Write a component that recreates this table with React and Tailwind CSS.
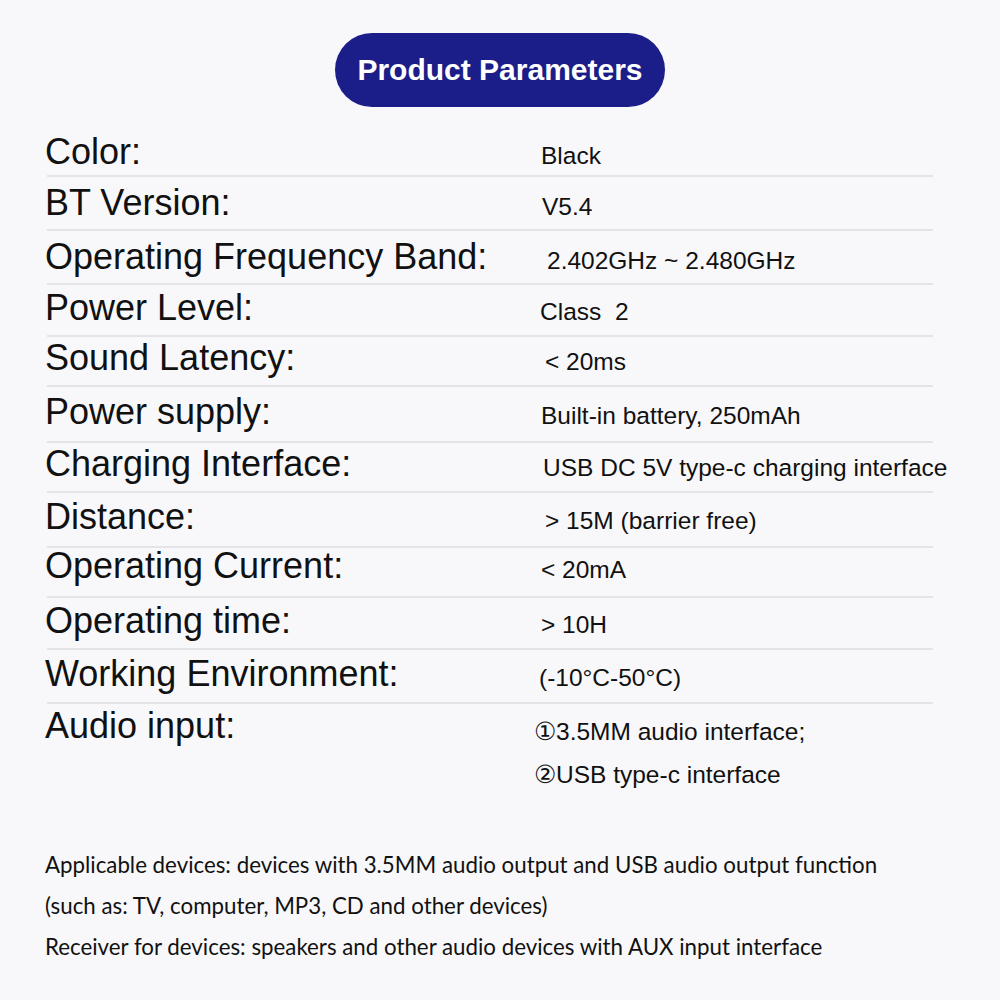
import React from "react";

/* ─── Data ───────────────────────────────────────────────────── */

const PARAMS = [
  { label: "Color:", value: "Black", row: "h-[54px] pb-[5px]", val: "ml-[1px]" },
  { label: "BT Version:", value: "V5.4", row: "h-[54px] pb-[8px]", val: "ml-[2px]" },
  { label: "Operating Frequency Band:", value: "2.402GHz ~ 2.480GHz", row: "h-[54px] pb-[8px]", val: "ml-[7px]" },
  { label: "Power Level:", value: "Class  2", row: "h-[52px] pb-[9px]", val: "ml-0" },
  { label: "Sound Latency:", value: "< 20ms", row: "h-[50px] pb-[9px]", val: "ml-[5px]" },
  { label: "Power supply:", value: "Built-in battery, 250mAh", row: "h-[56px] pb-[11px]", val: "ml-[1px]" },
  { label: "Charging Interface:", value: "USB DC 5V type-c charging interface", row: "h-[50px] pb-[9px]", val: "ml-[3px]" },
  { label: "Distance:", value: "> 15M (barrier free)", row: "h-[55px] pb-[11px]", val: "ml-[5px]" },
  { label: "Operating Current:", value: "< 20mA", row: "h-[50px] pb-[12px]", val: "ml-[1px]" },
  { label: "Operating time:", value: "> 10H", row: "h-[52px] pb-[9px]", val: "ml-[1px]" },
  { label: "Working Environment:", value: "(-10°C-50°C)", row: "h-[54px] pb-[10px]", val: "-ml-[1px]" },
];

const NOTES = [
  "Applicable devices: devices with 3.5MM audio output and USB audio output function",
  "(such as: TV, computer, MP3, CD and other devices)",
  "Receiver for devices: speakers and other audio devices with AUX input interface",
];

/* ─── Components ─────────────────────────────────────────────── */

function ParamRow({ label, value, row, val }) {
  return (
    <div className={`flex flex-col justify-end border-b-2 border-[#e4e4e8] ${row}`}>
      <div className="flex items-baseline whitespace-pre">
        <span className="w-[495px] shrink-0 -ml-[2px] text-[36px] leading-none">{label}</span>
        <span className={`text-[24.5px] leading-none ${val}`}>{value}</span>
      </div>
    </div>
  );
}

export default function App() {
  return (
    <div
      className="w-[1000px] h-[1000px] overflow-hidden bg-[#f8f8fa] text-[#111] pt-[33px]"
      style={{ fontFamily: '"Liberation Sans", Arial, sans-serif' }}
    >
      {/* Title pill */}
      <div className="mx-auto w-[330px] h-[74px] rounded-full bg-[#1b1e88] flex items-center justify-center">
        <span className="text-white font-bold text-[30px] leading-none">Product Parameters</span>
      </div>

      {/* Parameter table */}
      <div className="mt-[16px] ml-[47px] w-[886px]">
        {PARAMS.map((p) => (
          <ParamRow key={p.label} {...p} />
        ))}
        <div className="flex items-start pt-[4px] whitespace-pre">
          <span className="w-[495px] shrink-0 -ml-[2px] text-[36px] leading-none">Audio input:</span>
          <div className="-ml-[6px] mt-[2px] text-[24.5px] leading-[43px]">
            <div>①3.5MM audio interface;</div>
            <div>②USB type-c interface</div>
          </div>
        </div>
      </div>

      {/* Notes */}
      <div
        className="mt-[48px] ml-[45px] text-[22.3px] leading-[41px] text-[#111]"
        style={{ fontFamily: "Lato, sans-serif" }}
      >
        {NOTES.map((n) => (
          <p key={n}>{n}</p>
        ))}
      </div>
    </div>
  );
}
